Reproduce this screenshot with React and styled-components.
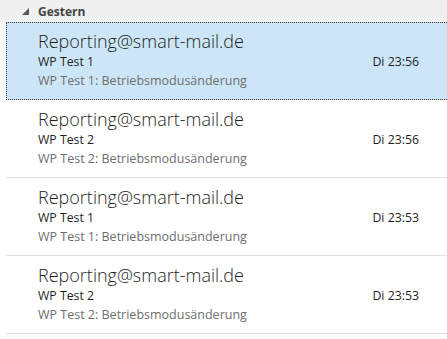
import React from 'react'
import styled, { createGlobalStyle } from 'styled-components';

const GlobalStyle = createGlobalStyle`
    html, body {
        margin: 0;
        padding: 0;
        background: #ffffff;
        overflow: hidden;
    }
    body {
        font-family: "Open Sans", "Liberation Sans", sans-serif;
        color: #262626;
    }
`;

const mails = [
    { from: 'Reporting@smart-mail.de', subject: 'WP Test 1', preview: 'WP Test 1: Betriebsmodusänderung', time: 'Di 23:56', selected: true },
    { from: 'Reporting@smart-mail.de', subject: 'WP Test 2', preview: 'WP Test 2: Betriebsmodusänderung', time: 'Di 23:56' },
    { from: 'Reporting@smart-mail.de', subject: 'WP Test 1', preview: 'WP Test 1: Betriebsmodusänderung', time: 'Di 23:53' },
    { from: 'Reporting@smart-mail.de', subject: 'WP Test 2', preview: 'WP Test 2: Betriebsmodusänderung', time: 'Di 23:53' },
];

function MailItem({ mail }) {
    return (
        <Item $selected={mail.selected}>
            <Sender>{mail.from}</Sender>
            <Subject>{mail.subject}</Subject>
            <Time>{mail.time}</Time>
            <Preview>{mail.preview}</Preview>
        </Item>
    )
}

function App() {
    return (
        <Pane>
            <GlobalStyle />
            <GroupHeader>
                <svg width="7" height="7" viewBox="0 0 7 7">
                    <polygon points="7,0 7,7 0,7" fill="#555" />
                </svg>
                <span>Gestern</span>
            </GroupHeader>
            <List>
                {mails.map((m, i) => <MailItem key={i} mail={m} />)}
            </List>
        </Pane>
    )
}

const Pane = styled.div`
    width: 447px;
    height: 339px;
    display: flex;
    flex-direction: column;
`;

const GroupHeader = styled.div`
    height: 22px;
    background: #f0f0f0;
    display: flex;
    align-items: center;
    gap: 9px;
    padding-left: 22px;
    font-size: 12px;
    font-weight: 700;
    color: #444;
    svg{
        margin-top: 1px;
    }
`;

const List = styled.div`
    display: flex;
    flex-direction: column;
    padding-left: 6px;
`;

const Item = styled.div`
    height: 78px;
    box-sizing: border-box;
    display: grid;
    grid-template-columns: 1fr auto;
    align-content: start;
    padding: 8px 28px 0 32px;
    background: ${p => p.$selected ? '#cde6f7' : '#ffffff'};
    border: ${p => p.$selected ? '1px dotted #333' : 'none'};
    border-right: none;
    border-bottom: ${p => p.$selected ? '1px dotted #333' : '1px solid #e1e1e1'};
    padding-left: ${p => p.$selected ? '31px' : '32px'};
    padding-top: ${p => p.$selected ? '7px' : '8px'};
`;

const Sender = styled.div`
    grid-column: 1 / -1;
    font-size: 18px;
    font-weight: 300;
    line-height: 23px;
    color: #1e1e1e;
`;

const Subject = styled.div`
    font-size: 12.3px;
    line-height: 18px;
    color: #1e1e1e;
`;

const Time = styled.div`
    font-size: 12.3px;
    line-height: 18px;
    color: #1e1e1e;
`;

const Preview = styled.div`
    grid-column: 1 / -1;
    font-size: 12.5px;
    line-height: 19px;
    color: #6e6e6e;
`;

export default App;
